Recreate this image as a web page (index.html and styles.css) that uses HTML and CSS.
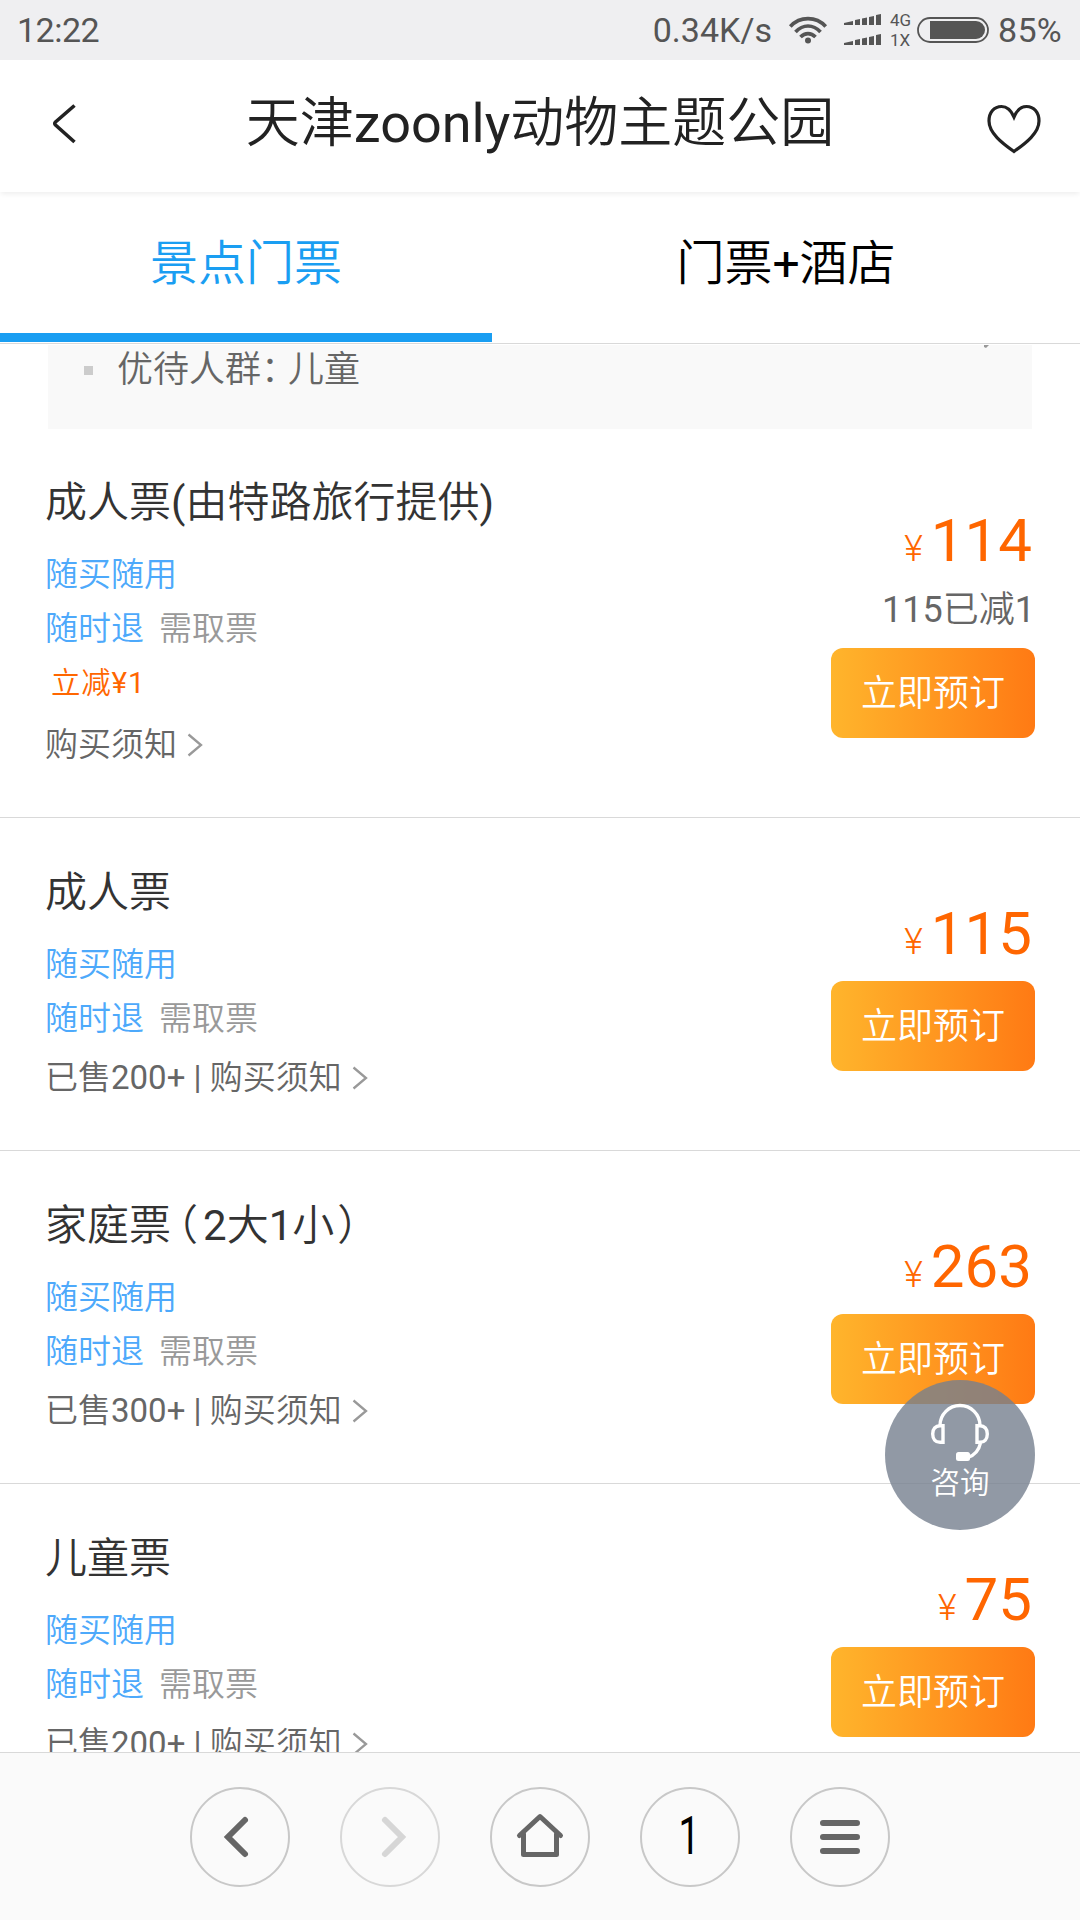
FILE: index.html
```html
<!DOCTYPE html>
<html lang="zh-CN">
<head>
<meta charset="utf-8">
<title>天津zoonly动物主题公园</title>
<link rel="stylesheet" href="styles.css">
</head>
<body>
<svg class="defs" width="0" height="0">
  <symbol id="more" viewBox="0 0 16 24"><path d="M1.500 1.500L14 12L1.500 22.500" fill="none" stroke="#999" stroke-width="2.300"/></symbol>
</svg>
<div class="screen">
  <header class="status">
    <span class="clock">12:22</span>
    <span class="speed">0.34K/s</span>
    <svg class="wifi" width="40" height="30" viewBox="0 0 40 30" fill="none" stroke="#555" stroke-width="3.700">
      <path d="M2.300 11.500C12 1 28 1 37.700 11.500M7.500 17C15 9 25 9 32.500 17M12.500 22C17 17.500 23 17.500 27.500 22"/>
      <circle cx="20" cy="25.500" r="3" fill="#555" stroke="none"/>
    </svg>
    <div class="signals">
      <svg width="38" height="12" viewBox="0 0 38 12" fill="#555"><path d="M0 9L9 7V11H0ZM11 6L16 5V11H11ZM18 4.500L23 3.500V11H18ZM25 3L30 2V11H25ZM32 1L37 0V11H32Z"/></svg>
      <svg width="38" height="12" viewBox="0 0 38 12" fill="#555"><path d="M0 9L9 7V11H0ZM11 6L16 5V11H11ZM18 4.500L23 3.500V11H18ZM25 3L30 2V11H25ZM32 1L37 0V11H32Z"/></svg>
    </div>
    <div class="nets"><span>4G</span><span>1X</span></div>
    <svg class="battery" width="72" height="26" viewBox="0 0 72 26">
      <rect x="1" y="1" width="70" height="24" rx="12" fill="none" stroke="#555" stroke-width="1.800"/>
      <path d="M13 4H59A9 9 0 0 1 59 22H13Z" fill="#555"/>
    </svg>
    <span class="percent">85%</span>
  </header>

  <div class="titlebar">
    <svg class="back" width="26" height="42" viewBox="0 0 26 42"><path d="M23.500 2.500L4.500 19Q3 20.500 4.500 22L23.500 39" fill="none" stroke="#222" stroke-width="3.600"/></svg>
    <h1>天津zoonly动物主题公园</h1>
    <svg class="heart" width="54" height="50" viewBox="0 0 54 50"><path d="M27 13C24 6 19 2.500 14.500 2.500C7 2.500 2 8.500 2 17C2 29 15 39 27 47.500C39 39 52 29 52 17C52 8.500 47 2.500 39.500 2.500C35 2.500 30 6 27 13Z" fill="none" stroke="#222" stroke-width="3.200"/></svg>
  </div>

  <nav class="tabs">
    <a class="tab active">景点门票</a>
    <a class="tab wide">门票+酒店</a>
  </nav>

  <main class="list">
    <section class="note">
      <i class="bullet"></i>
      <span class="note-text">优待人群<span class="colon">：</span>儿童</span>
      <svg class="note-arrow" width="8" height="4" viewBox="0 0 8 4"><path d="M1 0H6L3 3L1 2Z" fill="#999"/></svg>
    </section>

    <article class="ticket first">
      <div class="info">
        <h2>成人票(由特路旅行提供)</h2>
        <p class="tags">随买随用</p>
        <p class="tags">随时退<span>需取票</span></p>
        <p class="promo">立减¥1</p>
        <p class="notice">购买须知<svg class="more"><use href="#more"/></svg></p>
      </div>
      <div class="buy">
        <p class="price"><small>¥</small>114</p>
        <p class="cut">115已减1</p>
        <button>立即预订</button>
      </div>
    </article>

    <article class="ticket">
      <div class="info">
        <h2>成人票</h2>
        <p class="tags">随买随用</p>
        <p class="tags">随时退<span>需取票</span></p>
        <p class="notice">已售200+ | 购买须知<svg class="more"><use href="#more"/></svg></p>
      </div>
      <div class="buy">
        <p class="price"><small>¥</small>115</p>
        <button>立即预订</button>
      </div>
    </article>

    <article class="ticket">
      <div class="info">
        <h2>家庭票<span class="open">（</span>2大1小<span class="close">）</span></h2>
        <p class="tags">随买随用</p>
        <p class="tags">随时退<span>需取票</span></p>
        <p class="notice">已售300+ | 购买须知<svg class="more"><use href="#more"/></svg></p>
      </div>
      <div class="buy">
        <p class="price"><small>¥</small>263</p>
        <button>立即预订</button>
      </div>
    </article>

    <article class="ticket">
      <div class="info">
        <h2>儿童票</h2>
        <p class="tags">随买随用</p>
        <p class="tags">随时退<span>需取票</span></p>
        <p class="notice">已售200+ | 购买须知<svg class="more"><use href="#more"/></svg></p>
      </div>
      <div class="buy">
        <p class="price"><small>¥</small>75</p>
        <button>立即预订</button>
      </div>
    </article>
  </main>

  <a class="consult">
    <svg width="60" height="60" viewBox="0 0 60 60" fill="none" stroke="#fff" stroke-width="3.400">
      <path d="M10 24V22.500A20 20 0 0 1 50 22.500V24"/>
      <path d="M13 22.700V39.300H10C5.500 39.300 2.700 36 2.700 31S5.500 22.700 10 22.700ZM47 22.700V39.300H50C54.500 39.300 57.300 36 57.300 31S54.500 22.700 50 22.700Z"/>
      <path d="M50.500 40C49 47 45 52 38 54.500"/>
      <rect x="26" y="49" width="14" height="9" rx="2.500" fill="#fff" stroke="none"/>
    </svg>
    <span>咨询</span>
  </a>

  <footer class="browser">
    <a class="key"><svg width="100" height="100" viewBox="0 0 100 100"><path d="M55 33L38 50L55 67" fill="none" stroke="#666" stroke-width="6" stroke-linecap="round"/></svg></a>
    <a class="key off"><svg width="100" height="100" viewBox="0 0 100 100"><path d="M45 33L62 50L45 67" fill="none" stroke="#d6d6d6" stroke-width="6" stroke-linecap="round"/></svg></a>
    <a class="key"><svg width="100" height="100" viewBox="0 0 100 100"><path d="M29.500 48.500L50 29.500L70.500 48.500M33.500 47V67.500H66.500V47" fill="none" stroke="#666" stroke-width="5" stroke-linecap="round" stroke-linejoin="round"/></svg></a>
    <a class="key"><span class="count">1</span></a>
    <a class="key"><svg width="100" height="100" viewBox="0 0 100 100"><path d="M33 36H67M33 50H67M33 64H67" fill="none" stroke="#666" stroke-width="6" stroke-linecap="round"/></svg></a>
  </footer>
</div>
</body>
</html>
```
FILE: styles.css
```css
* { box-sizing: border-box; margin: 0; padding: 0; }
body {
  width: 1080px;
  height: 1920px;
  overflow: hidden;
  background: #fff;
  font-family: Roboto, "Noto Sans CJK SC DemiLight", "Noto Sans CJK SC Light", "Noto Sans CJK SC", sans-serif;
  font-weight: 400;
}
svg { display: block; flex: none; }
.defs { position: absolute; }
.screen { position: relative; display: flex; flex-direction: column; height: 1920px; }

.status {
  display: flex;
  align-items: center;
  height: 60px;
  flex: none;
  padding: 0 18px 0 17px;
  background: #efeff1;
  color: #555;
  font-size: 34px;
  line-height: 60px;
}
.clock { letter-spacing: -0.500px; }
.speed { margin-left: auto; }
.wifi { margin-left: 16px; }
.signals { display: flex; flex-direction: column; gap: 8px; margin-left: 16px; }
.nets { display: flex; flex-direction: column; width: 24px; margin-left: 8px; font-size: 17px; line-height: 20px; }
.battery { margin-left: 3px; }
.percent { margin-left: 9px; letter-spacing: .3px; }

.titlebar {
  display: flex;
  align-items: center;
  height: 132px;
  flex: none;
  padding: 0 39px 0 51px;
  box-shadow: 0 3px 5px -1px rgba(0, 0, 0, .07);
}
.back { margin-top: -4px; }
.titlebar h1 { flex: 1; padding-left: 16px; color: #222; font-size: 54px; font-weight: 400; line-height: 80px; margin-top: -5px; text-align: center; }
.heart { margin-top: 6px; }

.tabs { display: flex; height: 152px; flex: none; border-bottom: 1px solid #d9d9d9; }
.tab { width: 492px; height: 150px; padding-top: 32px; font-size: 48px; line-height: 80px; text-align: center; color: #000; }
.tab.active { color: #1a9ef2; border-bottom: 9px solid #1a9ef2; }
.tab.wide { width: 588px; }

.list { flex: 1; overflow: hidden; padding-top: 1px; }
.note {
  display: flex;
  height: 84px;
  margin: 0 48px;
  padding-left: 36px;
  background: #f9f9f9;
  color: #666;
  font-size: 36px;
  line-height: 50px;
}
.bullet { width: 9px; height: 9px; margin: 21px 24px 0 0; background: #ccc; }
.colon { letter-spacing: -9px; }
.note-arrow { margin: 0 41px 0 auto; }

.ticket {
  display: flex;
  justify-content: space-between;
  height: 333px;
  padding: 0 45px;
  border-bottom: 1px solid #d9d9d9;
}
.ticket.first { height: 389px; }
.info { padding-top: 45px; }
.first .info { padding-top: 44px; }
.info h2 { color: #333; font-size: 42px; font-weight: 400; line-height: 60px; margin-bottom: 15px; }
.open { margin: 0 5px 0 -15px; }
.close { margin-left: 3px; }
.tags { color: #4da9fb; font-size: 33px; line-height: 54px; }
.tags span { margin-left: 15px; color: #999; }
.promo { padding-left: 6px; color: #f60; font-size: 29.500px; letter-spacing: .8px; line-height: 54px; }
.notice { display: flex; align-items: center; color: #666; font-size: 33px; line-height: 54px; margin-top: 5px; }
.first .notice { margin-top: 8px; }
.more { width: 16px; height: 24px; margin-left: 10px; }

.buy { display: flex; flex-direction: column; align-items: flex-end; padding-top: 81px; }
.first .buy { padding-top: 77px; }
.price { color: #f60; font-size: 60px; line-height: 70px; padding-right: 3px; }
.price small { font-size: 36px; font-weight: 300; margin-right: 8px; }
.cut { color: #666; font-size: 36px; line-height: 52px; margin-bottom: 12px; }
.buy button {
  width: 204px;
  height: 90px;
  border: 0;
  border-radius: 12px;
  background: linear-gradient(90deg, #ffb52c, #ff7a14);
  color: #fff;
  font: inherit;
  font-size: 36px;
  padding-bottom: 6px;
}
.price + button { margin-top: 4px; }

.consult {
  position: absolute;
  left: 885px;
  top: 1380px;
  width: 150px;
  height: 150px;
  border-radius: 50%;
  background: rgba(117, 127, 142, .8);
  display: flex;
  flex-direction: column;
  align-items: center;
  padding-top: 23px;
  color: #fff;
  font-size: 29.500px;
  line-height: 41px;
}

.browser {
  display: flex;
  justify-content: center;
  gap: 50px;
  height: 168px;
  flex: none;
  padding-top: 34px;
  border-top: 1px solid #d9d9d9;
  background: #fafafa;
}
.key {
  display: flex;
  align-items: center;
  justify-content: center;
  width: 100px;
  height: 100px;
  border: 2px solid #c8c8c8;
  border-radius: 50%;
  color: #000;
  font-size: 54px;
}
.key.off { border-color: #d8d8d8; }
.count { transform: scaleX(.7); margin: -4px 2px 0 0; }
```
